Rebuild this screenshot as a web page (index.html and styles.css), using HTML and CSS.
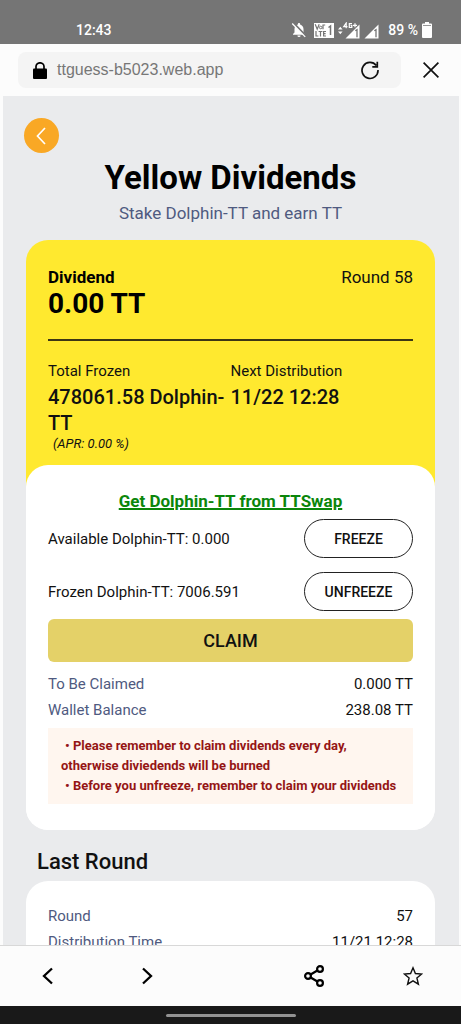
FILE: index.html
```html
<!DOCTYPE html>
<html lang="en">
<head>
<meta charset="utf-8">
<meta name="viewport" content="width=device-width, initial-scale=1">
<title>Yellow Dividends</title>
<link rel="stylesheet" href="styles.css">
</head>
<body>
<div class="status-bar">
  <span class="status-time">12:43</span>
  <div class="status-icons">
    <svg class="icon-bell" width="16" height="16" viewBox="0 0 16 16" aria-hidden="true">
      <path d="M8 1c-.7 0-1.100.5-1.100 1.100v.5C4.800 3.200 3.500 5 3.500 7v3.500L2 12v.8h12V12l-1.500-1.500V7c0-2-1.300-3.800-3.400-4.400v-.5C9.100 1.500 8.700 1 8 1zM6.400 13.500h3.200a1.600 1.600 0 0 1-3.200 0z" fill="#fff"/>
      <path d="M2.200.8l13 13.400" stroke="#757575" stroke-width="2"/>
      <path d="M1.200 1.500l13 13.400" stroke="#fff" stroke-width="1.300"/>
    </svg>
    <svg class="icon-volte" width="20" height="15" viewBox="0 0 20 15" aria-hidden="true">
      <path d="M0 0h20v15H0z" fill="#fff"/>
      <path d="M1.200 1.200L3.200 6.200 5.200 1.200M9 6.200V2h2.200M2 8v5h2.400M4.600 8.500h3.800M6.500 8.500V13.500M12 8.500H9.600v4.500H12M9.600 10.700h2" fill="none" stroke="#757575" stroke-width="1.200"/>
      <circle cx="6.700" cy="4.500" r="1.300" fill="none" stroke="#757575"/>
      <path d="M14.500 4.500l2-1.500v9" fill="none" stroke="#757575" stroke-width="1.500"/>
    </svg>
    <svg class="icon-signal" width="22" height="17" viewBox="0 0 22 17" aria-hidden="true">
      <path d="M0 7.500l2.300-2.700 2.300 2.700zM0 9.500l2.300 2.700 2.300-2.700z" fill="#fff"/>
      <path d="M21.500 2.500v14H7.500z" fill="#fff"/>
      <path d="M8.200 6.300V1L5.700 4.600h3.800M14 1.600h-2.700V5.500h2.500V3.600h-1.200" fill="none" stroke="#fff" stroke-width="1.200"/>
      <path d="M15 3.300h4M17 1.300v4" fill="none" stroke="#fff" stroke-width="1.200"/>
      <path d="M17.300 8.700l1.700-1v7.500" fill="none" stroke="#757575" stroke-width="1.300"/>
    </svg>
    <svg class="icon-signal" width="15" height="17" viewBox="0 0 15 17" aria-hidden="true">
      <path d="M14.500 2.500v14H.5z" fill="#fff"/>
      <path d="M10.300 8.700l1.700-1v7.500" fill="none" stroke="#757575" stroke-width="1.300"/>
    </svg>
    <span class="battery-text">89 %</span>
    <svg class="icon-battery" width="10" height="16" viewBox="0 0 10 16" aria-hidden="true">
      <path d="M3 0h4v1.500h2q1 0 1 1V15q0 1-1 1H1q-1 0-1-1V2.500q0-1 1-1h2z" fill="#fff"/>
      <path d="M1 3.500h8" stroke="#999"/>
    </svg>
  </div>
</div>

<header class="browser-bar">
  <div class="address">
    <svg width="14" height="17" viewBox="0 0 14 17" aria-hidden="true">
      <path d="M3 8V4.500a4 3.700 0 0 1 8 0V8" fill="none" stroke="#000" stroke-width="1.700"/>
      <rect y="6.500" width="14" height="10.500" rx="1" fill="#000"/>
    </svg>
    <span class="url">ttguess-b5023.web.app</span>
    <button class="icon-button" type="button" aria-label="Reload">
      <svg width="20" height="20" viewBox="0 0 20 20" fill="none" stroke="#111" stroke-width="1.700">
        <path d="M16.300 5.500A8 8 0 1 0 18 10M17.300 1.800v5h-5"/>
      </svg>
    </button>
  </div>
  <button class="icon-button" type="button" aria-label="Close">
    <svg width="16" height="16" viewBox="0 0 16 16" fill="none" stroke="#111" stroke-width="1.700">
      <path d="M.6.600l14.800 14.800M15.400.6L.6 15.400"/>
    </svg>
  </button>
</header>

<main class="page">
  <button class="back" type="button" aria-label="Back">
    <svg width="10" height="18" viewBox="0 0 10 18" fill="none" stroke="#fff" stroke-width="1.700">
      <path d="M9 1L1.500 9 9 17"/>
    </svg>
  </button>
  <h1 class="title">Yellow Dividends</h1>
  <p class="subtitle">Stake Dolphin-TT and earn TT</p>

  <section class="card dividend">
    <div class="summary">
      <div class="summary-head">
        <h2 class="label">Dividend</h2>
        <span class="round">Round 58</span>
      </div>
      <p class="amount">0.00 TT</p>
      <div class="stats">
        <div class="stat">
          <span class="stat-name">Total Frozen</span>
          <strong class="stat-value">478061.58 Dolphin-TT</strong>
          <em class="apr">(APR: 0.00 %)</em>
        </div>
        <div class="stat">
          <span class="stat-name">Next Distribution</span>
          <strong class="stat-value">11/22 12:28</strong>
        </div>
      </div>
    </div>
    <div class="card actions">
      <a class="swap-link" href="#">Get Dolphin-TT from TTSwap</a>
      <div class="stake-rows">
        <div class="row">
          <span>Available Dolphin-TT: 0.000</span>
          <button class="pill" type="button">FREEZE</button>
        </div>
        <div class="row">
          <span>Frozen Dolphin-TT: 7006.591</span>
          <button class="pill" type="button">UNFREEZE</button>
        </div>
      </div>
      <button class="claim" type="button">CLAIM</button>
      <dl class="facts">
        <div class="row"><dt>To Be Claimed</dt><dd>0.000 TT</dd></div>
        <div class="row"><dt>Wallet Balance</dt><dd>238.08 TT</dd></div>
      </dl>
      <div class="notice">
        <p class="notice-item">• Please remember to claim dividends every day, otherwise diviedends will be burned</p>
        <p class="notice-item">• Before you unfreeze, remember to claim your dividends</p>
      </div>
    </div>
  </section>

  <h2 class="section-title">Last Round</h2>
  <section class="card history">
    <dl class="facts">
      <div class="row"><dt>Round</dt><dd>57</dd></div>
      <div class="row"><dt>Distribution Time</dt><dd>11/21 12:28</dd></div>
    </dl>
  </section>
</main>

<nav class="toolbar">
  <div class="tool-group">
    <button class="icon-button" type="button" aria-label="Previous page">
      <svg width="12" height="18" viewBox="0 0 12 18" fill="none" stroke="#000" stroke-width="2.300"><path d="M10 1.500L2 9l8 7.500"/></svg>
    </button>
    <button class="icon-button" type="button" aria-label="Next page">
      <svg width="12" height="18" viewBox="0 0 12 18" fill="none" stroke="#000" stroke-width="2.300"><path d="M2 1.500L10 9l-8 7.500"/></svg>
    </button>
  </div>
  <div class="tool-group">
    <button class="icon-button" type="button" aria-label="Share">
      <svg width="20" height="22" viewBox="0 0 20 22" fill="none" stroke="#000" stroke-width="2.200">
        <circle cx="4" cy="11" r="2.900"/><circle cx="16" cy="4" r="2.900"/><circle cx="16" cy="18" r="2.900"/>
        <path d="M6.600 9.500l6.800-4M6.600 12.500l6.800 4"/>
      </svg>
    </button>
    <button class="icon-button" type="button" aria-label="Bookmark">
      <svg width="20" height="20" viewBox="0 0 20 20" fill="none" stroke="#111" stroke-width="1.400">
        <path d="M10 1.800l2.400 5.700 6.300.5-4.800 4 1.500 6.200-5.400-3.300-5.400 3.300L6.100 12l-4.800-4 6.300-.5z"/>
      </svg>
    </button>
  </div>
</nav>
<div class="gesture-bar"><span class="gesture-handle"></span></div>
</body>
</html>
```
FILE: styles.css
```css
* {
  box-sizing: border-box;
}

body {
  margin: 0;
  height: 100vh;
  display: flex;
  flex-direction: column;
  overflow: hidden;
  background: #fcfcfc;
  color: #111;
  font-family: Roboto, "Liberation Sans", sans-serif;
  font-size: 15px;
  line-height: 20px;
}

h1, h2, p, dl, dd {
  margin: 0;
}

button {
  font: inherit;
  color: inherit;
  cursor: pointer;
}

svg {
  display: block;
}

.status-bar {
  display: flex;
  justify-content: space-between;
  align-items: center;
  flex: none;
  padding: 20px 29px 4px 76px;
  background: #757575;
  color: #fff;
  font-size: 14px;
  font-weight: 500;
}

.status-icons {
  display: flex;
  align-items: center;
  gap: 4px;
}

.icon-bell {
  margin-right: 3px;
}

.battery-text {
  margin-left: 5px;
}

.browser-bar {
  display: flex;
  align-items: center;
  flex: none;
  gap: 22px;
  padding: 8px 22px 8px 18px;
}

.address {
  display: flex;
  align-items: center;
  flex: 1;
  gap: 10px;
  height: 36px;
  padding: 0 21px 0 15px;
  border-radius: 8px;
  background: #f4f4f4;
}

.url {
  flex: 1;
  color: #777;
  font-family: "Liberation Sans", Arial, sans-serif;
  font-size: 16px;
}

.icon-button {
  padding: 0;
  border: 0;
  background: none;
}

.page {
  flex: 1;
  min-height: 0;
  overflow: hidden;
  margin: 0 2px 0 3px;
  padding: 22px 24px 0 23px;
  background: #eaebed;
}

.back {
  display: flex;
  align-items: center;
  justify-content: center;
  width: 35px;
  height: 35px;
  margin-left: -2px;
  padding: 0 1px 0 0;
  border: 0;
  border-radius: 50%;
  background: #f9a825;
}

.title {
  margin-top: 5px;
  color: #000;
  font-size: 33px;
  font-weight: 700;
  line-height: 40px;
  text-align: center;
}

.subtitle {
  margin: 5px 0 17px;
  color: #4f5a80;
  font-size: 17px;
  text-align: center;
}

.card {
  border-radius: 22px;
  background: #fff;
}

.dividend {
  background: linear-gradient(#ffe92f 60%, #fff 60%);
}

.summary {
  padding: 27px 22px 13px;
}

.summary-head {
  display: flex;
  justify-content: space-between;
}

.label,
.round {
  font-size: 17px;
  line-height: 20px;
}

.label {
  color: #000;
  font-weight: 700;
}

.amount {
  padding-bottom: 18px;
  border-bottom: 2px solid #3c3714;
  color: #000;
  font-size: 28px;
  font-weight: 700;
  line-height: 34px;
}

.stats {
  display: grid;
  grid-template-columns: 1fr 1fr;
  padding-top: 20px;
}

.stat {
  display: flex;
  flex-direction: column;
}

.stat-name {
  margin-bottom: 3px;
}

.stat-value {
  font-size: 20px;
  font-weight: 500;
  line-height: 26px;
}

.apr {
  padding-left: 5px;
  font-size: 13px;
  line-height: 16px;
}

.actions {
  display: flex;
  flex-direction: column;
  padding: 26px 22px;
}

.swap-link {
  align-self: center;
  color: #0b860b;
  font-size: 17px;
  font-weight: 700;
  text-decoration-thickness: 2px;
}

.row {
  display: flex;
  justify-content: space-between;
  align-items: center;
}

.stake-rows {
  display: flex;
  flex-direction: column;
  gap: 14px;
  margin: 8px 0;
}

.pill {
  width: 109px;
  height: 39px;
  padding: 0;
  border: 1px solid #222;
  border-radius: 20px;
  background: #fff;
  font-size: 14px;
  font-weight: 500;
}

.claim {
  height: 43px;
  border: 0;
  border-radius: 6px;
  background: #e4d168;
  font-size: 18px;
  font-weight: 500;
}

.facts {
  display: flex;
  flex-direction: column;
  gap: 6px;
}

.facts dt {
  color: #4f5a80;
}

.actions .facts {
  margin: 12px 0 8px;
}

.notice {
  padding: 8px 13px;
  background: #fff6ef;
  color: #951515;
  font-size: 13px;
  font-weight: 700;
}

.notice-item {
  text-indent: 4px;
}

.section-title {
  margin: 19px 0 6px 11px;
  font-size: 22px;
  font-weight: 500;
  line-height: 26px;
}

.history {
  padding: 25px 22px;
}

.toolbar {
  display: flex;
  justify-content: space-between;
  flex: none;
  padding: 19px 38px 19px 42px;
  border-top: 1px solid #d8d8d8;
}

.tool-group {
  display: flex;
  align-items: center;
  gap: 79px;
}

.tool-group .icon-button {
  min-width: 12px;
}

.tool-group:first-child {
  gap: 87px;
}

.gesture-bar {
  display: flex;
  justify-content: center;
  flex: none;
  padding: 8px 0 7px;
  background: #191919;
}

.gesture-handle {
  width: 130px;
  height: 3px;
  border-radius: 2px;
  background: #929292;
}
```
